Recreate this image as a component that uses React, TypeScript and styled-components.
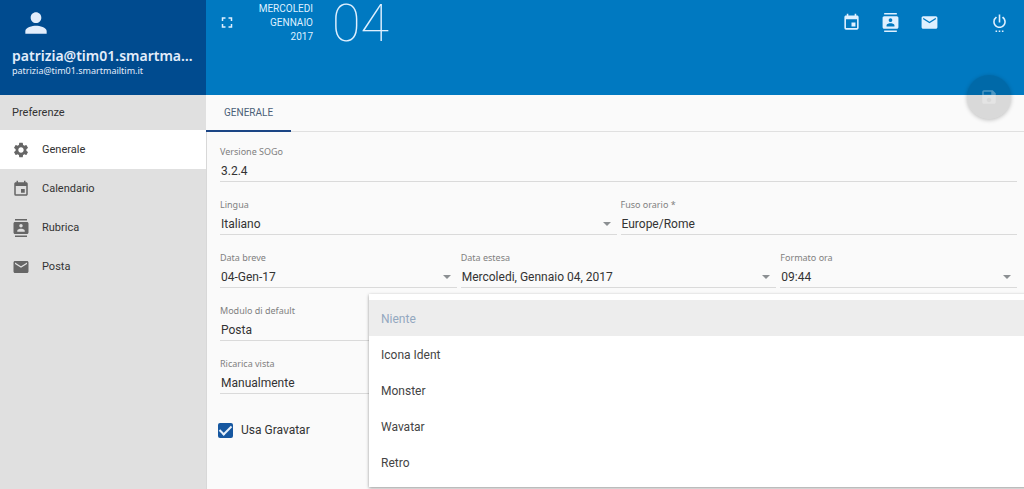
import React from 'react';
import styled, { createGlobalStyle } from 'styled-components';
import {
  MdContacts,
  MdEmail,
  MdEvent,
  MdFullscreen,
  MdPerson,
  MdSave,
  MdSettings,
  MdSettingsPower,
} from 'react-icons/md';

const GlobalStyle = createGlobalStyle`
  * { box-sizing: border-box; }
  body {
    margin: 0;
    background: #fafafa;
    color: #333;
    font-family: Roboto, "Noto Sans", sans-serif;
    font-size: 12px;
    overflow: hidden;
  }
  button, input, select { font: inherit; color: inherit; }
`;

const Page = styled.div`
  display: flex;
  min-height: 100vh;
`;

const Sidebar = styled.aside`
  flex: 0 0 206px;
  min-width: 0;
  background: #e0e0e0;
`;

const Account = styled.header`
  height: 95px;
  padding: 7px 12px 0;
  background: #004b8f;
  color: #e3edfb;
  font-family: "Noto Sans", sans-serif;
`;

const Avatar = styled(MdPerson)`
  display: block;
  width: 32px;
  height: 32px;
  margin-left: 8px;
`;

const AccountName = styled.div`
  margin-top: 7px;
  overflow: hidden;
  font-size: 14px;
  font-weight: 600;
  line-height: 20px;
  text-overflow: ellipsis;
  white-space: nowrap;
`;

const AccountMail = styled.div`
  font-size: 9px;
  line-height: 10px;
`;

const SideTitle = styled.h2`
  margin: 0;
  padding: 0 12px;
  font-size: 11px;
  font-weight: 400;
  line-height: 35px;
`;

const NavLink = styled.a<{ $active?: boolean }>`
  display: flex;
  align-items: center;
  gap: 12px;
  height: 39px;
  padding: 0 12px;
  background: ${(p) => (p.$active ? '#fff' : 'transparent')};
  color: #333;
  font-size: 11px;
  text-decoration: none;

  svg {
    width: 18px;
    height: 18px;
    color: #666;
  }
`;

const Main = styled.main`
  position: relative;
  display: flex;
  flex: 1;
  flex-direction: column;
  min-width: 0;
`;

const TopBar = styled.header`
  display: flex;
  align-items: flex-start;
  height: 95px;
  padding: 0 5px 0 12px;
  background: #0079c1;
  color: #dff0ff;
`;

const IconButton = styled.button`
  display: flex;
  align-items: center;
  justify-content: center;
  width: 39px;
  height: 45px;
  padding: 0;
  border: 0;
  background: none;

  svg {
    width: 19px;
    height: 19px;
  }
`;

const ExpandButton = styled(IconButton)`
  width: 18px;
`;

const DateLabel = styled.div`
  width: 77px;
  font-size: 10px;
  line-height: 14px;
  padding-top: 2px;
  text-align: right;
`;

const DayNumber = styled.div`
  margin-left: 19px;
  font-size: 52px;
  font-weight: 100;
  line-height: 48px;
`;

const Modules = styled.nav`
  display: flex;
  margin-left: auto;
`;

const PowerButton = styled(IconButton)`
  margin-left: 31px;
`;

const SaveButton = styled.button`
  position: absolute;
  top: 75px;
  right: 13px;
  display: flex;
  align-items: center;
  justify-content: center;
  width: 44px;
  height: 44px;
  padding: 0;
  border: 0;
  border-radius: 50%;
  background: rgba(0, 0, 0, 0.13);
  box-shadow: 0 1px 4px rgba(0, 0, 0, 0.25);
  color: rgba(255, 255, 255, 0.3);

  svg {
    width: 18px;
    height: 18px;
  }
`;

const Tabs = styled.div`
  display: flex;
  height: 37px;
  border-bottom: 1px solid #e0e0e0;
`;

const Tab = styled.button`
  height: 37px;
  padding: 0 18px;
  border: 0;
  border-bottom: 2px solid #1b4585;
  background: none;
  color: #4b5f78;
  font-size: 10px;
`;

const Form = styled.form`
  position: relative;
  flex: 1;
  padding: 13px 7px 0 13px;
  border-left: 1px solid #d8d8d8;
  overflow: hidden;
`;

const Row = styled.div<{ $columns?: string }>`
  display: grid;
  grid-template-columns: ${(p) => p.$columns ?? '1fr'};
  gap: 4px;
  height: 53px;
`;

const Field = styled.label`
  position: relative;
  display: flex;
  flex-direction: column;
  align-self: start;
  min-width: 0;
  border-bottom: 1px solid #dadada;
`;

const Caption = styled.span`
  color: #808080;
  font-family: "Noto Sans", sans-serif;
  font-size: 9px;
  line-height: 14px;
`;

const TextInput = styled.input`
  width: 100%;
  height: 22px;
  padding: 1px 1px 0;
  border: 0;
  outline: 0;
  background: none;
`;

const Select = styled.select`
  width: 100%;
  height: 22px;
  padding: 1px 1px 0;
  border: 0;
  outline: 0;
  appearance: none;
  background: none;
`;

const Arrow = styled.i`
  position: absolute;
  right: 6px;
  bottom: 8px;
  border: 4px solid transparent;
  border-top-color: #8b8f92;
  border-bottom: 0;
`;

const CheckLabel = styled.label`
  display: inline-flex;
  align-items: center;
  gap: 8px;
  height: 24px;
  margin-top: 8px;
  margin-left: -2px;
`;

const Checkbox = styled.input`
  display: grid;
  place-items: center;
  width: 15px;
  height: 15px;
  margin: 0;
  appearance: none;
  border-radius: 2px;
  background: #1657a0;

  &:checked::after {
    content: '';
    width: 5px;
    height: 10px;
    margin-bottom: 3px;
    border: solid #e6f0fb;
    border-width: 0 2px 2px 0;
    transform: rotate(45deg);
  }
`;

const Menu = styled.div`
  position: absolute;
  top: 162px;
  left: 162px;
  right: -4px;
  padding: 6px 0 7px;
  background: #fff;
  box-shadow: 0 1px 3px rgba(0, 0, 0, 0.4);
`;

const Option = styled.button`
  display: block;
  width: 100%;
  height: 36px;
  padding: 1px 12px 0;
  border: 0;
  background: none;
  color: #444;
  text-align: left;

  &[aria-selected='true'] {
    background: #ededed;
    color: #93a8c0;
  }
`;

const navigation = [
  { label: 'Generale', icon: MdSettings, active: true },
  { label: 'Calendario', icon: MdEvent },
  { label: 'Rubrica', icon: MdContacts },
  { label: 'Posta', icon: MdEmail },
];

const gravatarStyles = ['Niente', 'Icona Ident', 'Monster', 'Wavatar', 'Retro'];

function SelectField({ label, value }: { label: string; value: string }) {
  return (
    <Field>
      <Caption>{label}</Caption>
      <Select defaultValue={value}>
        <option>{value}</option>
      </Select>
      <Arrow />
    </Field>
  );
}

function TextField({ label, value, readOnly }: { label: string; value: string; readOnly?: boolean }) {
  return (
    <Field>
      <Caption>{label}</Caption>
      <TextInput defaultValue={value} readOnly={readOnly} />
    </Field>
  );
}

export default function App() {
  return (
    <>
      <GlobalStyle />
      <Page>
        <Sidebar>
          <Account>
            <Avatar />
            <AccountName>patrizia@tim01.smartmailtim.it</AccountName>
            <AccountMail>patrizia@tim01.smartmailtim.it</AccountMail>
          </Account>
          <SideTitle>Preferenze</SideTitle>
          <nav>
            {navigation.map(({ label, icon: Icon, active }) => (
              <NavLink key={label} href="#" $active={active}>
                <Icon />
                {label}
              </NavLink>
            ))}
          </nav>
        </Sidebar>
        <Main>
          <TopBar>
            <ExpandButton aria-label="Schermo intero"><MdFullscreen /></ExpandButton>
            <DateLabel>
              MERCOLEDI<br />GENNAIO<br />2017
            </DateLabel>
            <DayNumber>04</DayNumber>
            <Modules>
              <IconButton aria-label="Calendario"><MdEvent /></IconButton>
              <IconButton aria-label="Rubrica"><MdContacts /></IconButton>
              <IconButton aria-label="Posta"><MdEmail /></IconButton>
              <PowerButton aria-label="Esci"><MdSettingsPower /></PowerButton>
            </Modules>
          </TopBar>
          <SaveButton aria-label="Salva" disabled><MdSave /></SaveButton>
          <Tabs role="tablist">
            <Tab role="tab" aria-selected="true">GENERALE</Tab>
          </Tabs>
          <Form>
            <Row><TextField label="Versione SOGo" value="3.2.4" readOnly /></Row>
            <Row $columns="1fr 1fr">
              <SelectField label="Lingua" value="Italiano" />
              <TextField label="Fuso orario *" value="Europe/Rome" />
            </Row>
            <Row $columns="3fr 4fr 3fr">
              <SelectField label="Data breve" value="04-Gen-17" />
              <SelectField label="Data estesa" value="Mercoledi, Gennaio 04, 2017" />
              <SelectField label="Formato ora" value="09:44" />
            </Row>
            <Row><SelectField label="Modulo di default" value="Posta" /></Row>
            <Row><SelectField label="Ricarica vista" value="Manualmente" /></Row>
            <CheckLabel>
              <Checkbox type="checkbox" defaultChecked />
              Usa Gravatar
            </CheckLabel>
            <Menu role="listbox" aria-label="Icona alternativa">
              {gravatarStyles.map((name, i) => (
                <Option key={name} type="button" role="option" aria-selected={i === 0}>{name}</Option>
              ))}
            </Menu>
          </Form>
        </Main>
      </Page>
    </>
  );
}
